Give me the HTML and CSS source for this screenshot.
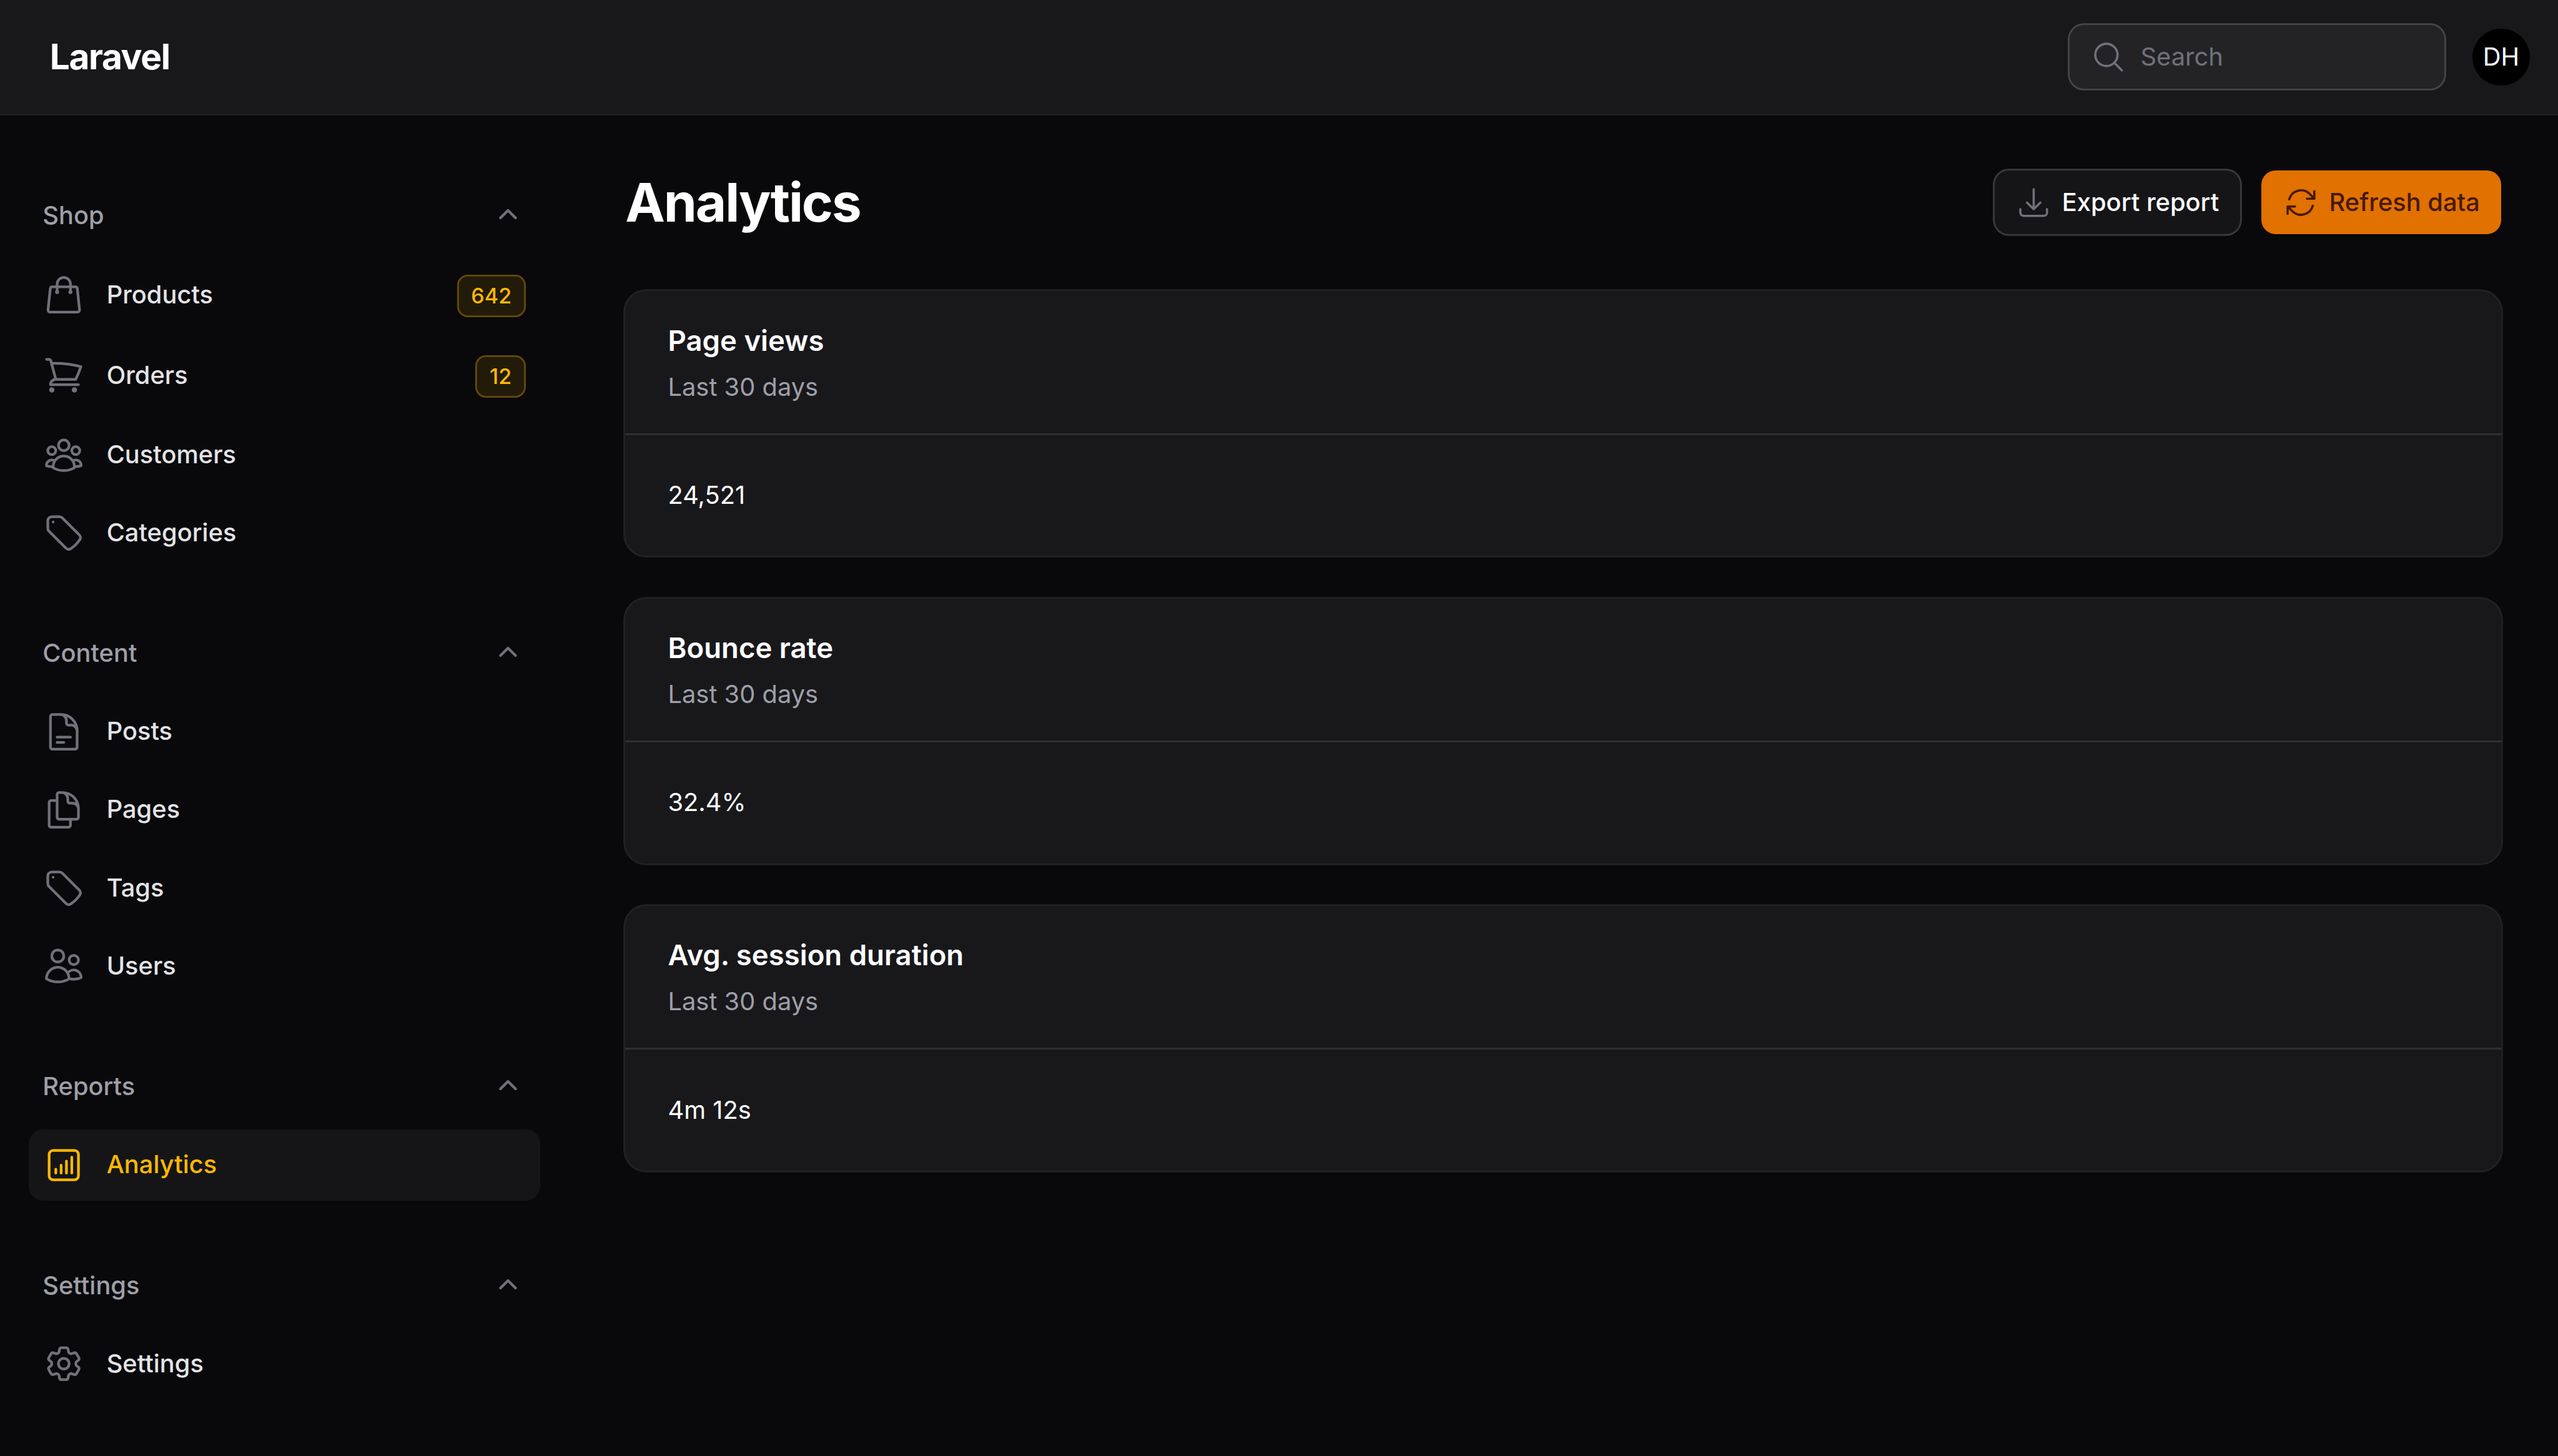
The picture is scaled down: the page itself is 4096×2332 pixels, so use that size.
FILE: index.html
```
<!DOCTYPE html>
<html lang="en">
	<head>
		<title>Analytics - Laravel</title>
		<meta charset="utf-8">
		<link rel="stylesheet" href="styles.css">
	</head>
	<body>
		<header class="topbar">
			<a class="logo" href="#">Laravel</a>
			<div class="topbar-end">
				<label class="search">
					<svg class="icon-md" viewBox="0 0 24 24"><path d="m21 21-5.197-5.197m0 0A7.5 7.5 0 1 0 5.196 5.196a7.5 7.5 0 0 0 10.607 10.607Z"/></svg>
					<input type="text" placeholder="Search">
				</label>
				<span class="avatar">DH</span>
			</div>
		</header>
		<div class="layout">
			<nav class="sidebar">
				<section class="group">
					<div class="group-label">Shop <svg class="chevron" viewBox="0 0 20 20"><path d="M9.47 6.47a.75.75 0 0 1 1.06 0l4.25 4.25a.75.75 0 1 1-1.06 1.06L10 8.06l-3.72 3.72a.75.75 0 0 1-1.06-1.06l4.25-4.25Z"/></svg></div>
					<a class="item" href="#">
						<svg class="icon-lg" viewBox="0 0 24 24"><path d="M15.75 10.5V6a3.75 3.75 0 1 0-7.5 0v4.5m11.356-1.993 1.263 12c.07.665-.45 1.243-1.119 1.243H4.25a1.125 1.125 0 0 1-1.12-1.243l1.264-12A1.125 1.125 0 0 1 5.513 7.5h12.974c.576 0 1.059.435 1.119 1.007ZM8.625 10.5a.375.375 0 1 1-.75 0 .375.375 0 0 1 .75 0Zm7.5 0a.375.375 0 1 1-.75 0 .375.375 0 0 1 .75 0Z"/></svg>
						<span class="item-label">Products</span>
						<span class="badge-wrap"><span class="badge">642</span></span>
					</a>
					<a class="item" href="#">
						<svg class="icon-lg" viewBox="0 0 24 24"><path d="M2.25 3h1.386c.51 0 .955.343 1.087.835l.383 1.437M7.5 14.25a3 3 0 0 0-3 3h15.75m-12.75-3h11.218c1.121-2.3 2.1-4.684 2.924-7.138a60.114 60.114 0 0 0-16.536-1.84M7.5 14.25 5.106 5.272M6 20.25a.75.75 0 1 1-1.5 0 .75.75 0 0 1 1.5 0Zm12.75 0a.75.75 0 1 1-1.5 0 .75.75 0 0 1 1.5 0Z"/></svg>
						<span class="item-label">Orders</span>
						<span class="badge-wrap"><span class="badge">12</span></span>
					</a>
					<a class="item" href="#">
						<svg class="icon-lg" viewBox="0 0 24 24"><path d="M18 18.72a9.094 9.094 0 0 0 3.741-.479 3 3 0 0 0-4.682-2.72m.94 3.198.001.031c0 .225-.012.447-.037.666A11.944 11.944 0 0 1 12 21c-2.17 0-4.207-.576-5.963-1.584A6.062 6.062 0 0 1 6 18.719m12 0a5.971 5.971 0 0 0-.941-3.197m0 0A5.995 5.995 0 0 0 12 12.75a5.995 5.995 0 0 0-5.058 2.772m0 0a3 3 0 0 0-4.681 2.72 8.986 8.986 0 0 0 3.74.477m.94-3.197a5.971 5.971 0 0 0-.94 3.197M15 6.75a3 3 0 1 1-6 0 3 3 0 0 1 6 0Zm6 3a2.25 2.25 0 1 1-4.5 0 2.25 2.25 0 0 1 4.5 0Zm-13.5 0a2.25 2.25 0 1 1-4.5 0 2.25 2.25 0 0 1 4.5 0Z"/></svg>
						<span class="item-label">Customers</span>
					</a>
					<a class="item" href="#">
						<svg class="icon-lg" viewBox="0 0 24 24"><path d="M9.568 3H5.25A2.25 2.25 0 0 0 3 5.25v4.318c0 .597.237 1.17.659 1.591l9.581 9.581c.699.699 1.78.872 2.607.33a18.095 18.095 0 0 0 5.223-5.223c.542-.827.369-1.908-.33-2.607L11.16 3.66A2.25 2.25 0 0 0 9.568 3Z"/><path d="M6 6h.008v.008H6V6Z"/></svg>
						<span class="item-label">Categories</span>
					</a>
				</section>
				<section class="group">
					<div class="group-label">Content <svg class="chevron" viewBox="0 0 20 20"><path d="M9.47 6.47a.75.75 0 0 1 1.06 0l4.25 4.25a.75.75 0 1 1-1.06 1.06L10 8.06l-3.72 3.72a.75.75 0 0 1-1.06-1.06l4.25-4.25Z"/></svg></div>
					<a class="item" href="#">
						<svg class="icon-lg" viewBox="0 0 24 24"><path d="M19.5 14.25v-2.625a3.375 3.375 0 0 0-3.375-3.375h-1.5A1.125 1.125 0 0 1 13.5 7.125v-1.5a3.375 3.375 0 0 0-3.375-3.375H8.25m0 12.75h7.5m-7.5 3H12M10.5 2.25H5.625c-.621 0-1.125.504-1.125 1.125v17.25c0 .621.504 1.125 1.125 1.125h12.75c.621 0 1.125-.504 1.125-1.125V11.25a9 9 0 0 0-9-9Z"/></svg>
						<span class="item-label">Posts</span>
					</a>
					<a class="item" href="#">
						<svg class="icon-lg" viewBox="0 0 24 24"><path d="M15.75 17.25v3.375c0 .621-.504 1.125-1.125 1.125h-9.75a1.125 1.125 0 0 1-1.125-1.125V7.875c0-.621.504-1.125 1.125-1.125H6.75a9.06 9.06 0 0 1 1.5.124m7.5 10.376h3.375c.621 0 1.125-.504 1.125-1.125V11.25c0-4.46-3.243-8.161-7.5-8.876a9.06 9.06 0 0 0-1.5-.124H9.375c-.621 0-1.125.504-1.125 1.125v3.5m7.5 10.375H9.375a1.125 1.125 0 0 1-1.125-1.125v-9.25m12 6.625v-1.875a3.375 3.375 0 0 0-3.375-3.375h-1.5a1.125 1.125 0 0 1-1.125-1.125v-1.5a3.375 3.375 0 0 0-3.375-3.375H9.75"/></svg>
						<span class="item-label">Pages</span>
					</a>
					<a class="item" href="#">
						<svg class="icon-lg" viewBox="0 0 24 24"><path d="M9.568 3H5.25A2.25 2.25 0 0 0 3 5.25v4.318c0 .597.237 1.17.659 1.591l9.581 9.581c.699.699 1.78.872 2.607.33a18.095 18.095 0 0 0 5.223-5.223c.542-.827.369-1.908-.33-2.607L11.16 3.66A2.25 2.25 0 0 0 9.568 3Z"/><path d="M6 6h.008v.008H6V6Z"/></svg>
						<span class="item-label">Tags</span>
					</a>
					<a class="item" href="#">
						<svg class="icon-lg" viewBox="0 0 24 24"><path d="M15 19.128a9.38 9.38 0 0 0 2.625.372 9.337 9.337 0 0 0 4.121-.952 4.125 4.125 0 0 0-7.533-2.493M15 19.128v-.003c0-1.113-.285-2.16-.786-3.07M15 19.128v.106A12.318 12.318 0 0 1 8.624 21c-2.331 0-4.512-.645-6.374-1.766l-.001-.109a6.375 6.375 0 0 1 11.964-3.07M12 6.375a3.375 3.375 0 1 1-6.75 0 3.375 3.375 0 0 1 6.75 0Zm8.25 2.25a2.625 2.625 0 1 1-5.25 0 2.625 2.625 0 0 1 5.25 0Z"/></svg>
						<span class="item-label">Users</span>
					</a>
				</section>
				<section class="group">
					<div class="group-label">Reports <svg class="chevron" viewBox="0 0 20 20"><path d="M9.47 6.47a.75.75 0 0 1 1.06 0l4.25 4.25a.75.75 0 1 1-1.06 1.06L10 8.06l-3.72 3.72a.75.75 0 0 1-1.06-1.06l4.25-4.25Z"/></svg></div>
					<a class="item active" href="#">
						<svg class="icon-lg" viewBox="0 0 24 24"><path d="M7.5 14.25v2.25m3-4.5v4.5m3-6.75v6.75m3-9v9M6 20.25h12A2.25 2.25 0 0 0 20.25 18V6A2.25 2.25 0 0 0 18 3.75H6A2.25 2.25 0 0 0 3.75 6v12A2.25 2.25 0 0 0 6 20.25Z"/></svg>
						<span class="item-label">Analytics</span>
					</a>
				</section>
				<section class="group">
					<div class="group-label">Settings <svg class="chevron" viewBox="0 0 20 20"><path d="M9.47 6.47a.75.75 0 0 1 1.06 0l4.25 4.25a.75.75 0 1 1-1.06 1.06L10 8.06l-3.72 3.72a.75.75 0 0 1-1.06-1.06l4.25-4.25Z"/></svg></div>
					<a class="item" href="#">
						<svg class="icon-lg" viewBox="0 0 24 24"><path d="M9.594 3.94c.09-.542.56-.94 1.11-.94h2.593c.55 0 1.02.398 1.11.94l.213 1.281c.063.374.313.686.645.87.074.04.147.083.22.127.325.196.72.257 1.075.124l1.217-.456a1.125 1.125 0 0 1 1.37.49l1.296 2.247a1.125 1.125 0 0 1-.26 1.431l-1.003.827c-.293.241-.438.613-.43.992a7.723 7.723 0 0 1 0 .255c-.008.378.137.75.43.991l1.004.827c.424.35.534.955.26 1.43l-1.298 2.247a1.125 1.125 0 0 1-1.369.491l-1.217-.456c-.355-.133-.75-.072-1.076.124a6.47 6.47 0 0 1-.22.128c-.331.183-.581.495-.644.869l-.213 1.281c-.09.543-.56.94-1.11.94h-2.594c-.55 0-1.019-.398-1.11-.94l-.213-1.281c-.062-.374-.312-.686-.644-.87a6.52 6.52 0 0 1-.22-.127c-.325-.196-.72-.257-1.076-.124l-1.217.456a1.125 1.125 0 0 1-1.369-.49l-1.297-2.247a1.125 1.125 0 0 1 .26-1.431l1.004-.827c.292-.24.437-.613.43-.991a6.932 6.932 0 0 1 0-.255c.007-.38-.138-.751-.43-.992l-1.004-.827a1.125 1.125 0 0 1-.26-1.43l1.297-2.247a1.125 1.125 0 0 1 1.37-.491l1.216.456c.356.133.751.072 1.076-.124.072-.044.146-.086.22-.128.332-.183.582-.495.644-.869l.214-1.28Z"/><path d="M15 12a3 3 0 1 1-6 0 3 3 0 0 1 6 0Z"/></svg>
						<span class="item-label">Settings</span>
					</a>
				</section>
			</nav>
			<main class="main">
				<div class="page-header">
					<h1>Analytics</h1>
					<div class="actions">
						<button class="btn btn-gray">
							<svg class="icon-md" viewBox="0 0 24 24"><path d="M3 16.5v2.25A2.25 2.25 0 0 0 5.25 21h13.5A2.25 2.25 0 0 0 21 18.75V16.5M16.5 12 12 16.5m0 0L7.5 12m4.5 4.5V3"/></svg>
							Export report
						</button>
						<button class="btn btn-primary">
							<svg class="icon-md" viewBox="0 0 24 24"><path d="M16.023 9.348h4.992v-.001M2.985 19.644v-4.992m0 0h4.992m-4.993 0 3.181 3.183a8.25 8.25 0 0 0 13.803-3.7M4.031 9.865a8.25 8.25 0 0 1 13.803-3.7l3.181 3.182m0-4.991v4.99"/></svg>
							Refresh data
						</button>
					</div>
				</div>
				<div class="cards">
					<section class="card">
						<div class="card-header">
							<h3>Page views</h3>
							<p>Last 30 days</p>
						</div>
						<div class="card-content">24,521</div>
					</section>
					<section class="card">
						<div class="card-header">
							<h3>Bounce rate</h3>
							<p>Last 30 days</p>
						</div>
						<div class="card-content">32.4%</div>
					</section>
					<section class="card">
						<div class="card-header">
							<h3>Avg. session duration</h3>
							<p>Last 30 days</p>
						</div>
						<div class="card-content">4m 12s</div>
					</section>
				</div>
			</main>
		</div>
	</body>
</html>
```

FILE: styles.css
```
html {
	font-size: 45.5111px;
}
* {
	box-sizing: border-box;
	margin: 0;
	padding: 0;
}
body {
	font-family: Inter, sans-serif;
	font-size: .875rem;
	line-height: 1.25rem;
	background-color: #09090b;
	color: #fff;
	height: 100vh;
	overflow: hidden;
}
a {
	color: inherit;
	text-decoration: none;
}
svg {
	flex-shrink: 0;
	fill: none;
	stroke: #71717b;
	stroke-width: 1.5;
	stroke-linecap: round;
	stroke-linejoin: round;
}
.icon-md {
	width: 1.25rem;
	height: 1.25rem;
}
.icon-lg {
	width: 1.5rem;
	height: 1.5rem;
}

/* topbar */
.topbar {
	display: flex;
	align-items: center;
	justify-content: space-between;
	height: 4rem;
	padding: 0 1rem 0 1.75rem;
	background-color: #18181b;
	box-shadow: 0 0 0 .0625rem rgba(255, 255, 255, .1);
}
.logo {
	font-size: 1.25rem;
	line-height: 1.25rem;
	font-weight: 700;
	letter-spacing: -.025em;
}
.topbar-end {
	display: flex;
	align-items: center;
	gap: 1rem;
}
.search {
	display: flex;
	align-items: center;
	gap: .5rem;
	width: 13.1875rem;
	height: 2.25rem;
	padding: 0 .75rem;
	border-radius: .5rem;
	background-color: rgba(255, 255, 255, .05);
	box-shadow: 0 0 0 .0625rem rgba(255, 255, 255, .2);
}
.search input {
	width: 100%;
	min-width: 0;
	border: 0;
	outline: 0;
	background: none;
	color: #fff;
	font: inherit;
}
.search input::placeholder {
	color: #71717b;
}
.avatar {
	display: flex;
	align-items: center;
	justify-content: center;
	width: 2rem;
	height: 2rem;
	border-radius: 50%;
	background-color: #000;
}

.layout {
	display: flex;
}

/* sidebar */
.sidebar {
	display: flex;
	flex-direction: column;
	gap: 1.75rem;
	width: 20rem;
	flex-shrink: 0;
	padding: 2.3333rem 1rem 0;
}
.group {
	display: flex;
	flex-direction: column;
	gap: .25rem;
}
.group-label {
	display: flex;
	align-items: center;
	justify-content: space-between;
	height: 2.5rem;
	padding: 0 .5rem;
	font-weight: 500;
	color: #9f9fa9;
}
.chevron {
	width: 1.25rem;
	height: 1.25rem;
	fill: #71717b;
	stroke: none;
}
.item {
	display: flex;
	align-items: center;
	gap: .75rem;
	padding: .5rem;
	border-radius: .5rem;
	font-weight: 500;
	color: #e4e4e7;
}
.item-label {
	flex: 1;
}
.item.active {
	background-color: rgba(255, 255, 255, .05);
	color: #ffb900;
}
.item.active svg {
	stroke: #ffb900;
}
.badge-wrap {
	padding-top: .0833rem;
}
.badge {
	display: block;
	height: 1.5rem;
	padding: 0 .5rem;
	border-radius: .375rem;
	font-size: .75rem;
	line-height: 1.5rem;
	color: #ffb900;
	background-color: rgba(255, 185, 0, .1);
	box-shadow: inset 0 0 0 .0625rem rgba(255, 185, 0, .3);
}

/* content */
.main {
	flex: 1;
	padding: 2rem;
}
.page-header {
	display: flex;
	align-items: center;
	justify-content: space-between;
	margin-bottom: 2rem;
}
h1 {
	font-size: 1.875rem;
	line-height: 2.25rem;
	font-weight: 700;
	letter-spacing: -.025em;
}
.actions {
	display: flex;
	gap: .75rem;
}
.btn {
	display: flex;
	align-items: center;
	gap: .375rem;
	height: 2.25rem;
	padding: 0 .75rem;
	border: 0;
	border-radius: .5rem;
	font: inherit;
	font-weight: 500;
}
.btn-gray {
	background-color: rgba(255, 255, 255, .05);
	box-shadow: 0 0 0 .0625rem rgba(255, 255, 255, .2);
	color: #fff;
}
.btn-primary {
	background-color: #e17100;
	color: #461901;
}
.btn-primary svg {
	stroke: #461901;
}
.cards {
	display: flex;
	flex-direction: column;
	gap: 1.5rem;
}
.card {
	border-radius: .75rem;
	background-color: #18181b;
	box-shadow: 0 0 0 .0625rem rgba(255, 255, 255, .1);
}
.card-header {
	display: flex;
	flex-direction: column;
	gap: .25rem;
	padding: 1rem 1.5rem;
}
.card-header h3 {
	font-size: 1rem;
	line-height: 1.5rem;
	font-weight: 600;
}
.card-header p {
	color: #9f9fa9;
}
.card-content {
	border-top: 3px solid rgba(255, 255, 255, .1);
	padding: 1.5rem;
}
```
